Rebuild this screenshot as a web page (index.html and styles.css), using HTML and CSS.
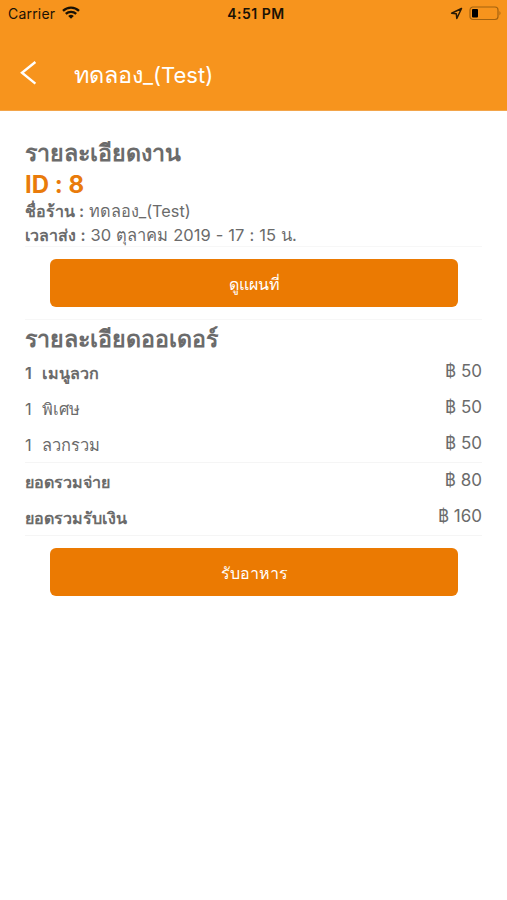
FILE: index.html
```html
<!DOCTYPE html>
<html lang="th">
<head>
<meta charset="utf-8">
<title>ทดลอง_(Test)</title>
<link rel="stylesheet" href="styles.css">
</head>
<body>
<header class="header">
  <div class="status">
    <div class="status-left">
      <span class="carrier">Carrier</span>
      <svg class="wifi" width="18" height="13" viewBox="0 0 18 13" fill="none" stroke="#1a1205" stroke-width="2.3"><path d="M1 4.9a11.6 11.6 0 0 1 16 0M3.8 7.9a7.5 7.5 0 0 1 10.4 0"/><path d="M6.2 10a4.2 4.2 0 0 1 5.6 0L9 12.8z" fill="#1a1205" stroke="none"/></svg>
    </div>
    <span class="clock">4:51 PM</span>
    <div class="status-right">
      <svg width="13" height="13" viewBox="0 0 13 13" fill="none" stroke="#2a1a05" stroke-width="1.5" stroke-linejoin="round"><path d="M11.5 1.5L1.6 6.2l4.7.5.5 4.8z"/></svg>
      <svg width="33" height="15" viewBox="0 0 33 15"><rect x="1" y="1" width="28" height="12.5" rx="3" fill="none" stroke="#a3620f" stroke-width="1.2"/><rect x="3" y="3" width="6" height="8.5" rx="1" fill="#000"/><path d="M30.5 5q2 2.2 0 4.5z" fill="#a3620f"/></svg>
    </div>
  </div>
  <div class="nav">
    <svg class="back" width="18" height="26" viewBox="0 0 18 26" fill="none" stroke="#fff" stroke-width="2.4"><path d="M16.4 2L3 12.8l13.4 10.8"/></svg>
    <h1 class="title"><span class="title-th">ทดลอง</span>_(Test)</h1>
  </div>
</header>
<main class="content">
  <section class="job">
    <h2 class="heading">รายละเอียดงาน</h2>
    <p class="job-id">ID : 8</p>
    <p class="info"><b>ชื่อร้าน :</b> ทดลอง_(Test)</p>
    <p class="info info-time"><b>เวลาส่ง :</b> 30 ตุลาคม 2019 - 17 : 15 น.</p>
  </section>
  <div class="action"><button class="button">ดูแผนที่</button></div>
  <section class="order">
    <h2 class="heading order-heading">รายละเอียดออเดอร์</h2>
    <div class="row"><span class="name strong"><span class="qty">1</span>เมนูลวก</span><span class="price">฿ 50</span></div>
    <div class="row"><span class="name"><span class="qty">1</span>พิเศษ</span><span class="price">฿ 50</span></div>
    <div class="row"><span class="name"><span class="qty">1</span>ลวกรวม</span><span class="price">฿ 50</span></div>
  </section>
  <section class="totals">
    <div class="row"><span class="name strong">ยอดรวมจ่าย</span><span class="price">฿ 80</span></div>
    <div class="row"><span class="name strong">ยอดรวมรับเงิน</span><span class="price">฿ 160</span></div>
  </section>
  <div class="action action-last"><button class="button">รับอาหาร</button></div>
</main>
</body>
</html>
```

FILE: styles.css
```css
* { box-sizing: border-box; }
body { margin: 0; min-height: 900px; background: #fff; color: #6b6b6b; font-family: Inter, "Liberation Sans", sans-serif; font-feature-settings: "calt" 0; }
h1, h2, p { margin: 0; white-space: nowrap; }

.header { height: 111px; background: #f7941d; border-bottom: 1px solid #f3a54a; }
.status { height: 28px; display: grid; grid-template-columns: 1fr auto 1fr; align-items: center; padding: 0 5px 0 8px; color: #1a1205; font-size: 14px; }
.status-left { display: flex; align-items: center; gap: 7px; }
.carrier { margin-top: -2px; letter-spacing: .2px; }
.wifi { margin-top: -3px; }
.clock { margin: -1px 0 0 2px; font-weight: 600; letter-spacing: .5px; }
.status-right { display: flex; align-items: center; justify-content: flex-end; gap: 6px; margin-top: -2px; }
.nav { display: flex; align-items: center; height: 82px; padding: 12px 0 0 19px; }
.back { margin-top: -4px; }
.title { margin-left: 37px; color: #fff; font-size: 22px; font-weight: 400; line-height: 30px; }
.title-th { font-size: 23.5px; }

.content { padding: 27px 25px 0; }
.job { height: 109px; border-bottom: 1px solid #f7f7f7; }
.heading { height: 32px; line-height: 31px; font-size: 23.2px; font-weight: 600; }
.job-id { height: 29px; line-height: 29px; font-size: 24px; font-weight: 700; color: #e97b0b; }
.info { height: 24px; line-height: 24px; font-size: 16.3px; }
.info-time { font-size: 16.5px; word-spacing: .4px; }
.info b { font-weight: 600; font-size: 16px; }

.action { height: 73px; padding: 12px 24px 0 25px; border-bottom: 1px solid #f7f7f7; }
.button { display: block; width: 100%; height: 48px; padding: 0; border: 0; border-radius: 6px; background: #eb7a02; color: #fff; font: 500 16px/50px Inter, "Liberation Sans", sans-serif; }

.order { height: 143px; border-bottom: 1px solid #f5f5f5; }
.order-heading { height: 35px; line-height: 38px; }
.row { display: flex; justify-content: space-between; height: 36px; line-height: 36px; font-size: 17px; }
.name { font-size: 16.4px; }
.strong { font-size: 16.1px; font-weight: 600; }
.qty { display: inline-block; width: 17px; }
.price { margin-top: -2px; }
.totals { height: 73px; padding-top: 1px; border-bottom: 1px solid #f5f5f5; }
.action-last { border-bottom: 0; }
```
